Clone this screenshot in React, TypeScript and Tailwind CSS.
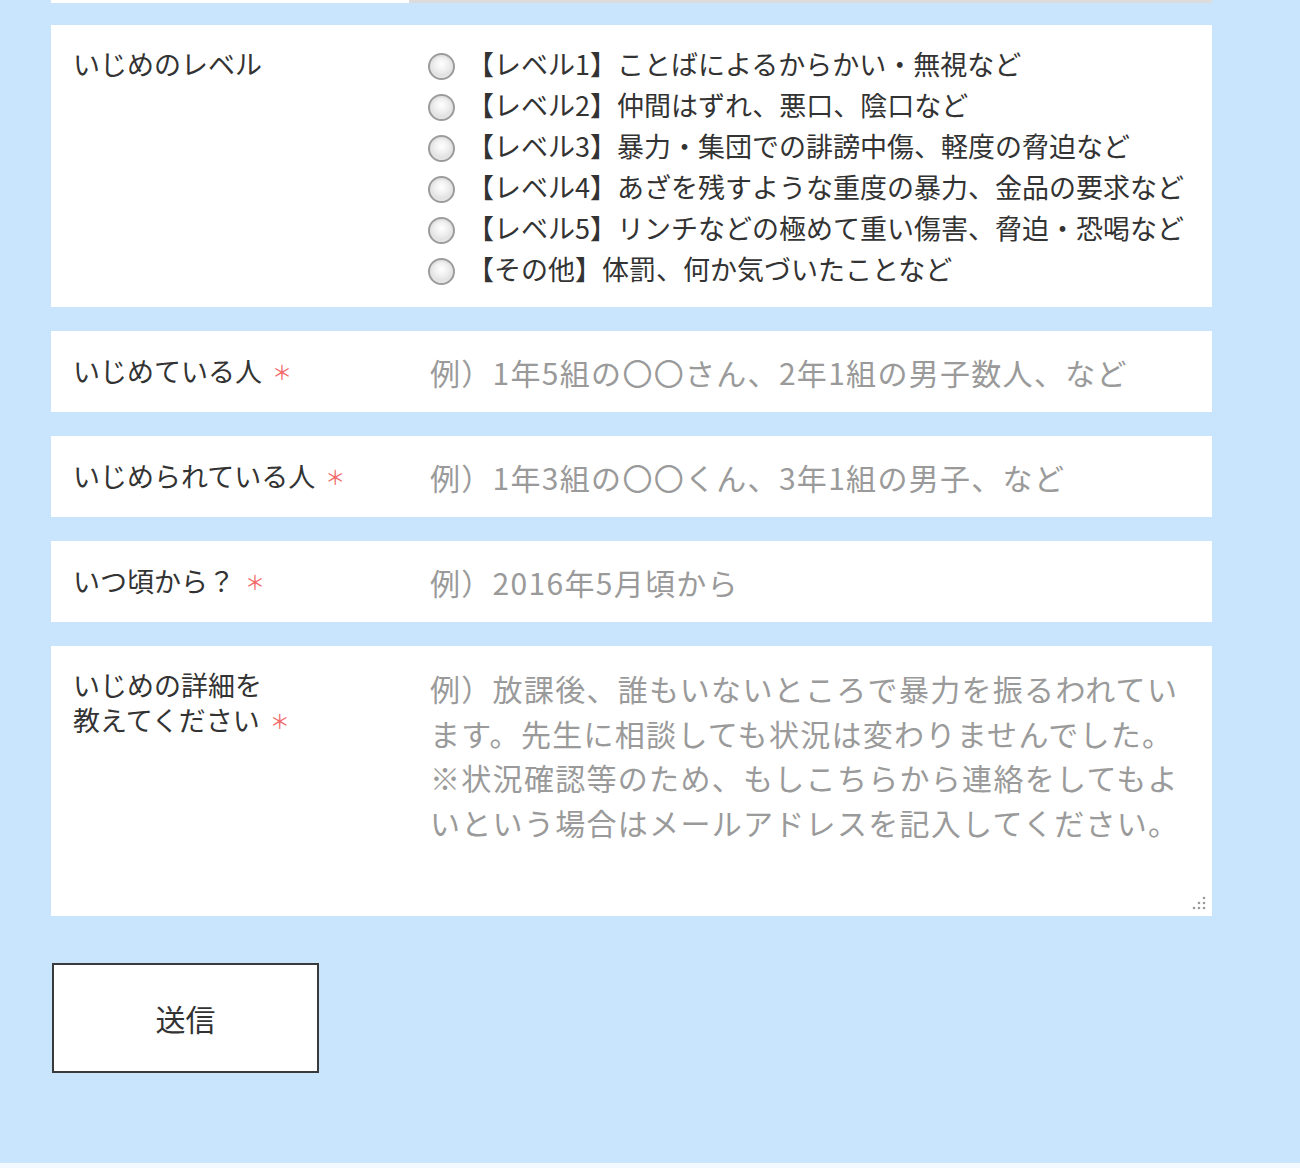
import React from "react";

const FONT = { fontFamily: '"Noto Sans CJK JP", "Noto Sans", sans-serif' };

const levels = [
  "【レベル1】ことばによるからかい・無視など",
  "【レベル2】仲間はずれ、悪口、陰口など",
  "【レベル3】暴力・集団での誹謗中傷、軽度の脅迫など",
  "【レベル4】あざを残すような重度の暴力、金品の要求など",
  "【レベル5】リンチなどの極めて重い傷害、脅迫・恐喝など",
  "【その他】体罰、何か気づいたことなど",
];

function Req() {
  return <span className="ml-[10px] inline-block text-[20px] leading-none text-[#f26a6a] align-[2px]">＊</span>;
}

function InputRow({ label, placeholder }: { label: string; placeholder: string }) {
  return (
    <div className="flex h-[81px] items-center bg-white">
      <div className="w-[377px] shrink-0 pl-[22px] text-[27px] text-[#333]">
        {label}
        <Req />
      </div>
      <input
        type="text"
        placeholder={placeholder}
        className="h-full flex-1 bg-transparent pl-[2px] text-[30px] tracking-[1.3px] text-[#333] outline-none placeholder:text-[#9a9a9a]"
        style={FONT}
      />
    </div>
  );
}

export default function App() {
  return (
    <div className="flex min-h-[1168px] flex-col bg-[#c8e5fd]" style={FONT}>
      <div className="ml-[51px] flex h-[3px] w-[1161px]">
        <div className="w-[358px] bg-white" />
        <div className="flex-1 bg-[#dcdcdc]" />
      </div>

      <div className="ml-[51px] mt-[22px] flex w-[1161px] flex-col gap-[24px]">
        <div className="flex bg-white py-[18px]">
          <div className="w-[377px] shrink-0 pl-[22px] text-[27px] leading-[41px] text-[#333]">
            いじめのレベル
          </div>
          <div className="flex flex-col">
            {levels.map((t) => (
              <label key={t} className="flex h-[41px] items-center">
                <input
                  type="radio"
                  name="level"
                  className="mt-[6px] h-[27px] w-[27px] shrink-0 appearance-none rounded-full border-2 border-[#9c9c9c] bg-[radial-gradient(circle_at_50%_40%,#ffffff_0%,#ececec_45%,#cbcbcb_100%)] shadow-[inset_0_0_0_2px_#e4e4e4]"
                />
                <span className="ml-[12px] whitespace-nowrap text-[27px] leading-[41px] text-[#333]">{t}</span>
              </label>
            ))}
          </div>
        </div>

        <InputRow label="いじめている人" placeholder="例）1年5組の〇〇さん、2年1組の男子数人、など" />
        <InputRow label="いじめられている人" placeholder="例）1年3組の〇〇くん、3年1組の男子、など" />
        <InputRow label="いつ頃から？" placeholder="例）2016年5月頃から" />

        <div className="relative flex h-[270px] bg-white">
          <div className="w-[377px] shrink-0 pl-[22px] pt-[21px] text-[27px] leading-[35px] text-[#333]">
            <div>いじめの詳細を</div>
            <div>
              教えてください
              <Req />
            </div>
          </div>
          <textarea
            placeholder={
              "例）放課後、誰もいないところで暴力を振るわれています。先生に相談しても状況は変わりませんでした。\n※状況確認等のため、もしこちらから連絡をしてもよいという場合はメールアドレスを記入してください。"
            }
            className="mt-[20px] h-[230px] w-[766px] resize-none bg-transparent pl-[2px] text-[30px] leading-[44.5px] tracking-[1.3px] text-[#333] outline-none placeholder:text-[#9a9a9a]"
            style={FONT}
          />
          <svg className="absolute bottom-[6px] right-[6px]" width="14" height="14" viewBox="0 0 14 14">
            <g fill="#9a9a9a">
              <circle cx="12" cy="2" r="1.3" />
              <circle cx="7" cy="7" r="1.3" />
              <circle cx="12" cy="7" r="1.3" />
              <circle cx="2" cy="12" r="1.3" />
              <circle cx="7" cy="12" r="1.3" />
              <circle cx="12" cy="12" r="1.3" />
            </g>
          </svg>
        </div>
      </div>

      <div className="ml-[52px] mt-[47px]">
        <button className="h-[110px] w-[267px] border-2 border-[#3a3a3a] bg-white text-[30px] text-[#333]" style={FONT}>
          送信
        </button>
      </div>

      <div className="flex-1" />
      <div className="h-[5px] bg-[#f4f9ff]" />
    </div>
  );
}
